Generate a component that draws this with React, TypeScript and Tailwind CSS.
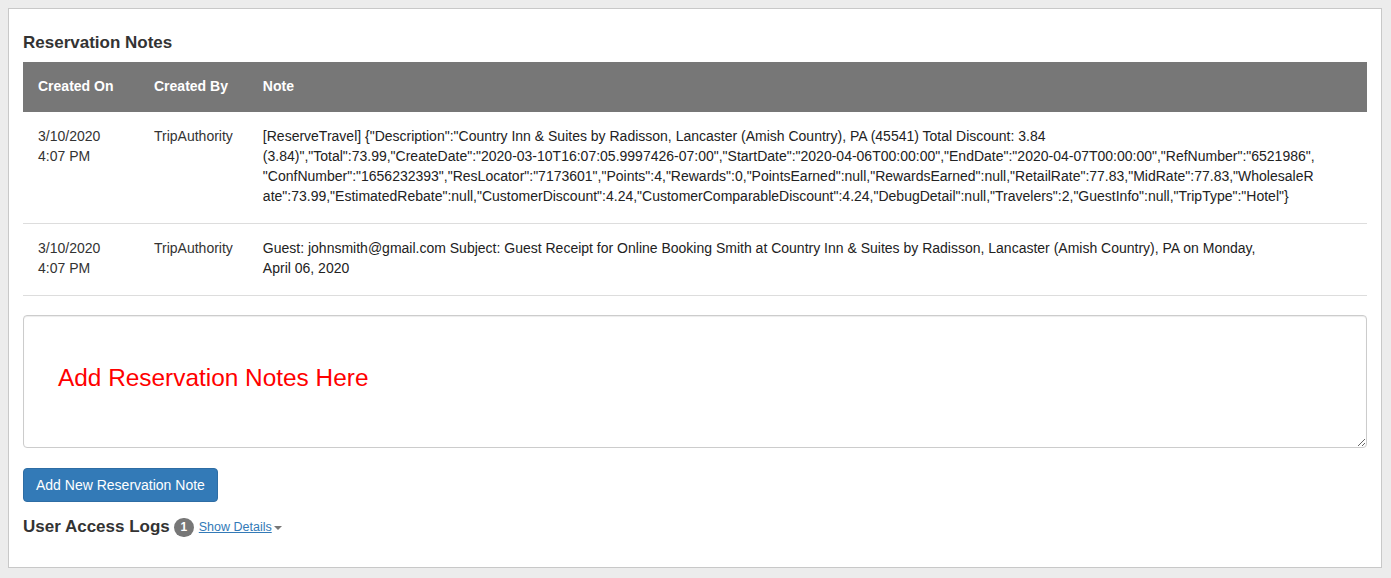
const notes = [
  {
    createdOn: ["3/10/2020", "4:07 PM"],
    createdBy: "TripAuthority",
    lines: [
      '[ReserveTravel] {"Description":"Country Inn & Suites by Radisson, Lancaster (Amish Country), PA (45541) Total Discount: 3.84',
      '(3.84)","Total":73.99,"CreateDate":"2020-03-10T16:07:05.9997426-07:00","StartDate":"2020-04-06T00:00:00","EndDate":"2020-04-07T00:00:00","RefNumber":"6521986",',
      '"ConfNumber":"1656232393","ResLocator":"7173601","Points":4,"Rewards":0,"PointsEarned":null,"RewardsEarned":null,"RetailRate":77.83,"MidRate":77.83,"WholesaleR',
      'ate":73.99,"EstimatedRebate":null,"CustomerDiscount":4.24,"CustomerComparableDiscount":4.24,"DebugDetail":null,"Travelers":2,"GuestInfo":null,"TripType":"Hotel"}',
    ],
  },
  {
    createdOn: ["3/10/2020", "4:07 PM"],
    createdBy: "TripAuthority",
    lines: [
      "Guest: johnsmith@gmail.com Subject: Guest Receipt for Online Booking Smith at Country Inn & Suites by Radisson, Lancaster (Amish Country), PA on Monday,",
      "April 06, 2020",
    ],
  },
];

export default function App() {
  return (
    <div className="min-h-[578px] bg-[#ececec] pt-2 pl-2 pr-[9px] pb-[10px] font-['Liberation_Sans',Arial,sans-serif] text-[14px] leading-[20px] text-[#333]">
      <div className="h-[560px] border border-[#c8c8c8] bg-white px-[14px] pt-[24px]">
        {/* Notes table */}
        <h3 className="mb-[9px] text-[17px] font-bold leading-[20px] text-[#333]">Reservation Notes</h3>
        <table className="w-full border-collapse">
          <thead>
            <tr className="bg-[#777777] text-left text-white">
              <th className="w-[116px] px-[15px] pt-[14px] pb-[16px] font-bold">Created On</th>
              <th className="w-[108px] px-[15px] pt-[14px] pb-[16px] font-bold">Created By</th>
              <th className="px-[15px] pt-[14px] pb-[16px] font-bold">Note</th>
            </tr>
          </thead>
          <tbody>
            {notes.map((n, i) => (
              <tr key={i} className="border-b border-[#dddddd] align-top">
                <td className="px-[15px] pt-[14px] pb-[17px]">
                  {n.createdOn[0]}
                  <br />
                  {n.createdOn[1]}
                </td>
                <td className="px-[15px] pt-[14px] pb-[17px]">{n.createdBy}</td>
                <td className="px-[15px] pt-[14px] pb-[17px] text-[#222]">
                  {n.lines.map((l, j) => (
                    <div key={j} className="whitespace-nowrap">
                      {l}
                    </div>
                  ))}
                </td>
              </tr>
            ))}
          </tbody>
        </table>

        {/* New note */}
        <textarea
          className="mt-[19px] block h-[133px] w-full rounded-[4px] border border-[#cccccc] pl-[34px] pt-[45px] text-[24.4px] leading-[34px] placeholder:text-[#ff0000] shadow-[inset_0_1px_1px_rgba(0,0,0,0.075)] outline-none"
          placeholder="Add Reservation Notes Here"
        />
        <button className="mt-[20px] h-[34px] rounded-[4px] border border-[#2e6da4] bg-[#337ab7] px-[12px] text-[14px] text-white">
          Add New Reservation Note
        </button>

        {/* Access logs */}
        <div className="mt-[15px] flex items-center">
          <span className="text-[17px] font-bold leading-[20px] text-[#333]">User Access Logs</span>
          <span className="ml-[4px] flex h-[19px] w-[20px] items-center justify-center rounded-full bg-[#777777] text-[12px] font-bold leading-none text-white">
            1
          </span>
          <a href="#" className="ml-[5px] text-[12.5px] text-[#337ab7] underline">
            Show Details
          </a>
          <span className="ml-[2px] mt-[2px] h-0 w-0 border-x-[4px] border-t-[4px] border-x-transparent border-t-[#777]"></span>
        </div>
      </div>
    </div>
  );
}
